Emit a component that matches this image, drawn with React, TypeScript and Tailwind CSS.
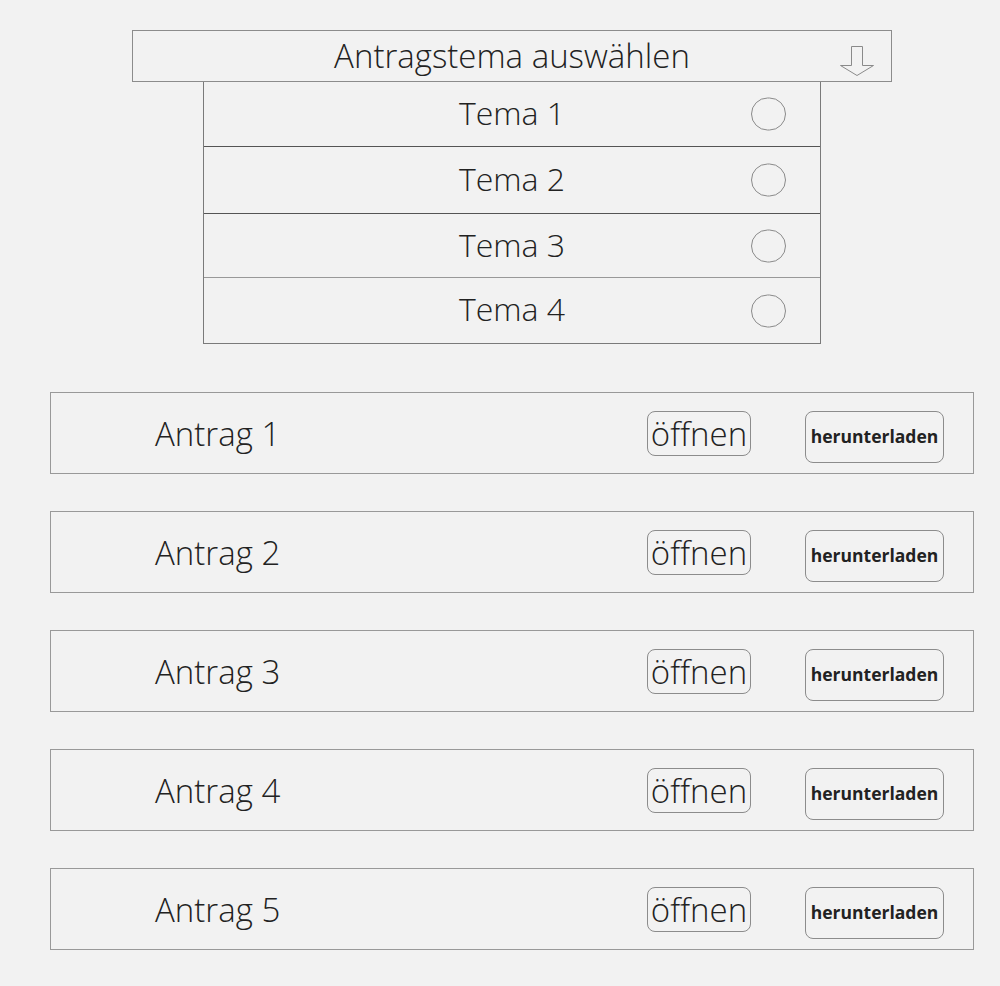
const THEMES = [
  { label: 'Tema 1', h: 'h-[64px]' },
  { label: 'Tema 2', h: 'h-[67px]' },
  { label: 'Tema 3', h: 'h-[64px]' },
  { label: 'Tema 4', h: 'h-[66px] pb-[4px]' },
];
const ANTRAEGE = ['Antrag 1', 'Antrag 2', 'Antrag 3', 'Antrag 4', 'Antrag 5'];

function DownArrow() {
  return (
    <svg width="36" height="30" viewBox="0 0 36 30" fill="none" stroke="#8a8a8a" strokeWidth="1">
      <path d="M12.5 0.5 H23.5 V19.5 H34.5 L18 29.5 L1.5 19.5 H12.5 Z" />
    </svg>
  );
}

export default function App() {
  return (
    <div
      className="min-h-[986px] w-[1000px] bg-[#f2f2f2] text-[#222]"
      style={{ fontFamily: '"Open Sans", "Noto Sans", sans-serif' }}
    >
      <div className="pt-[30px]">
        {/* Dropdown header */}
        <div className="relative ml-[132px] flex h-[52px] w-[760px] items-center justify-center border border-[#8c8c8c] pb-[2px]">
          <span className="text-[33px] font-light leading-none">Antragstema auswählen</span>
          <div className="absolute right-[16px] top-[15px]">
            <DownArrow />
          </div>
        </div>

        {/* Theme list */}
        <div className="ml-[203px] w-[618px] border border-t-0 border-[#7a7a7a]">
          {THEMES.map((t, i) => (
            <div
              key={t.label}
              className={
                'relative flex items-center justify-center pb-[2px] ' +
                t.h +
                (i === 0 ? '' : i === 3 ? ' border-t border-[#999]' : ' border-t border-[#555]')
              }
            >
              <span className="text-[32px] font-light leading-none">{t.label}</span>
              <div className="absolute right-[34px] top-1/2 h-[33px] w-[35px] -translate-y-1/2 rounded-full border border-[#8a8a8a]" />
            </div>
          ))}
        </div>

        {/* Anträge */}
        <div className="mt-[48px] flex flex-col gap-[37px] pl-[50px]">
          {ANTRAEGE.map(a => (
            <div
              key={a}
              className="flex h-[82px] w-[924px] items-center border border-[#999] pl-[104px] pr-[29px]"
            >
              <span className="flex-1 text-[33px] font-light leading-none">{a}</span>
              <button className="mr-[54px] h-[45px] w-[104px] rounded-[8px] border border-[#8c8c8c] text-[33px] font-light leading-none">
                öffnen
              </button>
              <button className="mt-[8px] h-[52px] w-[139px] rounded-[8px] border border-[#8c8c8c] text-[17.5px] font-bold leading-none">
                herunterladen
              </button>
            </div>
          ))}
        </div>
      </div>
    </div>
  );
}
